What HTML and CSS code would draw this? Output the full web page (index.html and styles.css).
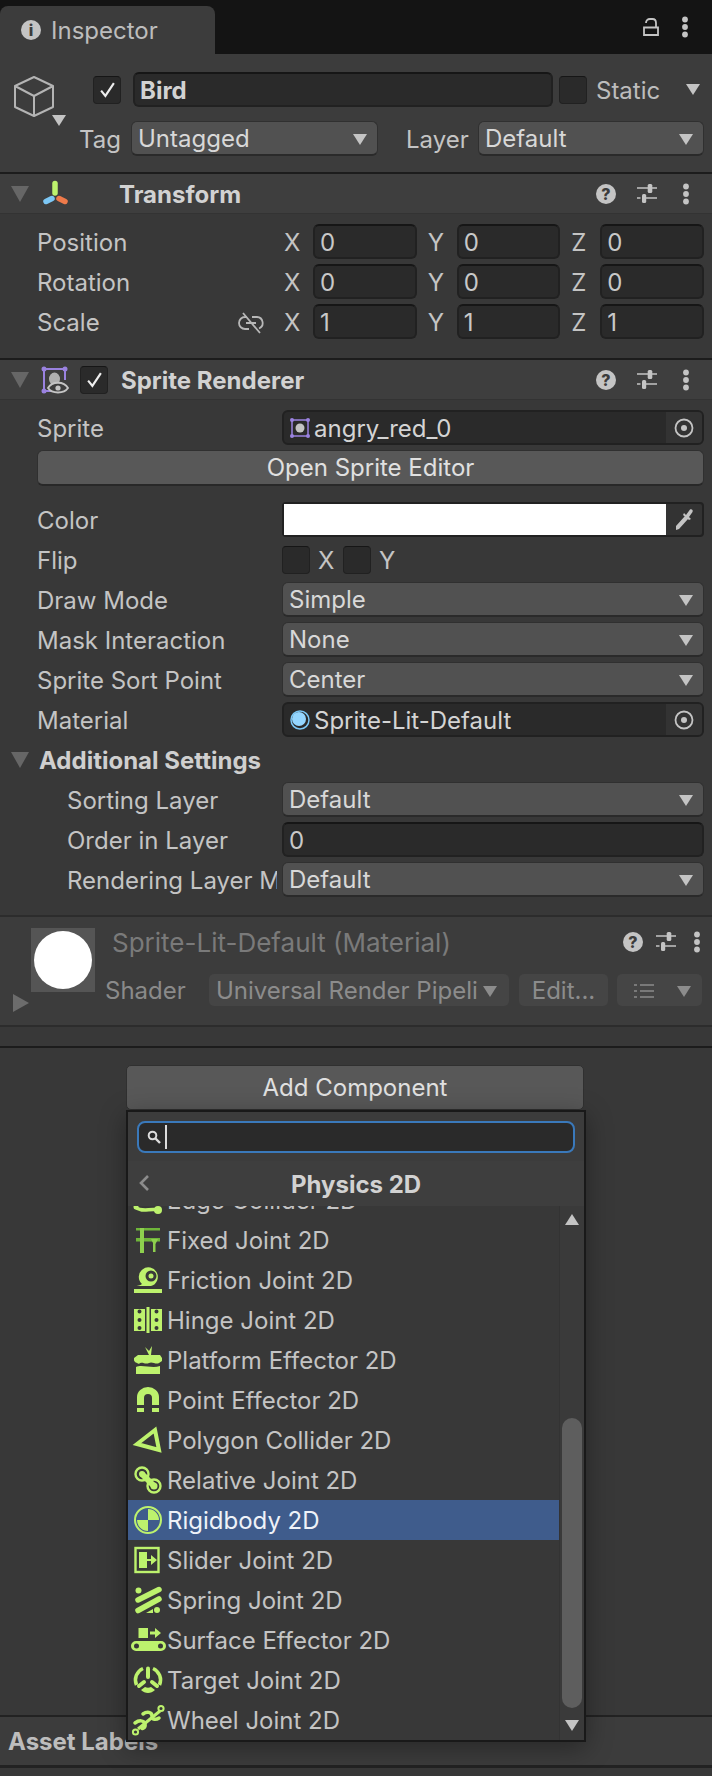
FILE: index.html
```html
<!DOCTYPE html>
<html lang="en">
<head>
    <meta charset="UTF-8">
    <title>Inspector</title>
    <link rel="stylesheet" href="styles.css">
</head>
<body>
    <svg class="defs" width="0" height="0">
        <symbol id="help" viewBox="0 0 20 20">
            <circle cx="10" cy="10" r="10" fill="#c4c4c4"/>
            <text x="10" y="16" text-anchor="middle" class="help-mark">?</text>
        </symbol>
        <symbol id="sliders" viewBox="0 0 20 20">
            <path d="M0 4H11M15 4H20M0 14H3.500M9 14H20" fill="none" stroke="#c4c4c4" stroke-width="1.700"/>
            <rect x="10.700" y="0" width="4.600" height="9" rx="1.500" fill="#c4c4c4"/>
            <rect x="5" y="10" width="4.200" height="9" rx="1.500" fill="#c4c4c4"/>
        </symbol>
        <symbol id="dots" viewBox="0 0 8 22">
            <circle cx="4" cy="3.500" r="2.900" fill="#c4c4c4"/>
            <circle cx="4" cy="11" r="2.900" fill="#c4c4c4"/>
            <circle cx="4" cy="18.500" r="2.900" fill="#c4c4c4"/>
        </symbol>
        <symbol id="target" viewBox="0 0 20 20">
            <circle cx="10" cy="10" r="8.500" fill="none" stroke="#c4c4c4" stroke-width="1.800"/>
            <circle cx="10" cy="10" r="3" fill="#c4c4c4"/>
        </symbol>
    </svg>

    <div class="tabbar">
        <div class="tab">
            <svg class="tab-icon" viewBox="0 0 20 20">
                <circle cx="10" cy="10" r="10" fill="#c4c4c4"/>
                <text x="10" y="16" text-anchor="middle" class="info-mark">i</text>
            </svg>
            <span>Inspector</span>
        </div>
        <div class="tab-tools">
            <svg class="lock" viewBox="0 0 16 18">
                <path d="M3 5C3 2.500 4.500 1 7 1H9.500C11.500 1 13 2.500 13 5V9.500M1 9.500H15V17H1Z" fill="none" stroke="#c4c4c4" stroke-width="1.800"/>
            </svg>
            <svg class="icon-dots"><use href="#dots"/></svg>
        </div>
    </div>

    <div class="obj-head">
        <div class="name-row">
            <div class="cube-wrap">
                <svg class="cube" viewBox="0 0 40 41">
                    <path d="M20 1L39 10V31L20 40L1 31V10ZM1 10L20 20L39 10M20 20V40" fill="none" stroke="#b4b4b4" stroke-width="2" stroke-linejoin="round"/>
                </svg>
                <i class="arrow cube-arrow"></i>
            </div>
            <div class="check checked">
                <svg viewBox="0 0 16 16"><path d="M2 9L6 14L14 2" fill="none" stroke="#eee" stroke-width="2"/></svg>
            </div>
            <div class="field name-field">Bird</div>
            <div class="check"></div>
            <span class="static-label">Static</span>
            <i class="arrow static-arrow"></i>
        </div>
        <div class="tag-row">
            <span class="tag-label">Tag</span>
            <div class="dropdown tag-drop">Untagged<i class="arrow"></i></div>
            <span class="layer-label">Layer</span>
            <div class="dropdown layer-drop">Default<i class="arrow"></i></div>
        </div>
    </div>

    <div class="comp-head">
        <i class="fold"></i>
        <svg class="comp-icon" viewBox="0 0 27 28">
            <path d="M14 3.500V13" stroke="#bdf26d" stroke-width="5.500" stroke-linecap="round"/>
            <path d="M5 21.500L11 18.500" stroke="#7cc7f5" stroke-width="5.500" stroke-linecap="round"/>
            <path d="M18 18.500L24 21.500" stroke="#ee7a4a" stroke-width="5.500" stroke-linecap="round"/>
        </svg>
        <span class="comp-spacer"></span>
        <b class="comp-title">Transform</b>
        <svg class="head-tool"><use href="#help"/></svg>
        <svg class="head-tool slide"><use href="#sliders"/></svg>
        <svg class="head-tool small"><use href="#dots"/></svg>
    </div>
    <div class="comp-body transform-body">
        <div class="row">
            <span class="label">Position</span>
            <div class="vec">
                <div class="vec-cell"><span>X</span><div class="field">0</div></div>
                <div class="vec-cell"><span>Y</span><div class="field">0</div></div>
                <div class="vec-cell"><span>Z</span><div class="field">0</div></div>
            </div>
        </div>
        <div class="row">
            <span class="label">Rotation</span>
            <div class="vec">
                <div class="vec-cell"><span>X</span><div class="field">0</div></div>
                <div class="vec-cell"><span>Y</span><div class="field">0</div></div>
                <div class="vec-cell"><span>Z</span><div class="field">0</div></div>
            </div>
        </div>
        <div class="row">
            <span class="label scale-label">Scale
                <svg class="link" viewBox="0 0 26 22">
                    <path d="M9 5H7A6 6 0 0 0 7 17H11M14 5H19A6 6 0 0 1 21 16.500M8 11H18M5 1L22 21" fill="none" stroke="#b8b8b8" stroke-width="1.800"/>
                </svg>
            </span>
            <div class="vec">
                <div class="vec-cell"><span>X</span><div class="field">1</div></div>
                <div class="vec-cell"><span>Y</span><div class="field">1</div></div>
                <div class="vec-cell"><span>Z</span><div class="field">1</div></div>
            </div>
        </div>
    </div>

    <div class="comp-head">
        <i class="fold"></i>
        <svg class="comp-icon" viewBox="0 0 27 28">
            <path d="M3 3H24V14M3 3V25H10" fill="none" stroke="#9a82e0" stroke-width="2"/>
            <circle cx="3" cy="3" r="2.500" fill="#9a82e0"/><circle cx="24" cy="3" r="2.500" fill="#9a82e0"/><circle cx="3" cy="25" r="2.500" fill="#9a82e0"/>
            <ellipse cx="13.500" cy="13" rx="5.500" ry="6.500" fill="#b0b0b0"/>
            <path d="M7 22C11 15 23 15 27 22C23 28 11 28 7 22Z" fill="#3e3e3e" stroke="#c4c4c4" stroke-width="1.800"/>
            <circle cx="17" cy="22" r="2.600" fill="#c4c4c4"/>
        </svg>
        <div class="check checked head-check">
            <svg viewBox="0 0 16 16"><path d="M2 9L6 14L14 2" fill="none" stroke="#eee" stroke-width="2"/></svg>
        </div>
        <b class="comp-title">Sprite Renderer</b>
        <svg class="head-tool"><use href="#help"/></svg>
        <svg class="head-tool slide"><use href="#sliders"/></svg>
        <svg class="head-tool small"><use href="#dots"/></svg>
    </div>
    <div class="comp-body sprite-body">
        <div class="row">
            <span class="label">Sprite</span>
            <div class="object-field">
                <svg class="obj-icon" viewBox="0 0 20 20">
                    <rect x="2" y="2" width="16" height="16" fill="none" stroke="#9a82e0" stroke-width="1.500"/>
                    <circle cx="2" cy="2" r="2" fill="#9a82e0"/><circle cx="18" cy="2" r="2" fill="#9a82e0"/><circle cx="2" cy="18" r="2" fill="#9a82e0"/><circle cx="18" cy="18" r="2" fill="#9a82e0"/>
                    <circle cx="10" cy="10" r="4.500" fill="#c4c4c4"/>
                </svg>
                <span class="object-name">angry_red_0</span>
                <div class="picker"><svg class="picker-icon"><use href="#target"/></svg></div>
            </div>
        </div>
        <button class="wide-btn">Open Sprite Editor</button>
        <div class="row color-row">
            <span class="label">Color</span>
            <div class="color-field">
                <div class="swatch"></div>
                <div class="dropper">
                    <svg viewBox="0 0 20 24"><path d="M2 22L2 18L11 8L14 11L5 21ZM10 5L12 7L16 1.500C17.500 .5 19.500 2 18.500 4L15 9L17 11L15 12L9 7Z" fill="#c4c4c4"/></svg>
                </div>
            </div>
        </div>
        <div class="row">
            <span class="label">Flip</span>
            <div class="flip">
                <div class="check"></div><span>X</span>
                <div class="check"></div><span>Y</span>
            </div>
        </div>
        <div class="row">
            <span class="label">Draw Mode</span>
            <div class="dropdown">Simple<i class="arrow"></i></div>
        </div>
        <div class="row">
            <span class="label">Mask Interaction</span>
            <div class="dropdown">None<i class="arrow"></i></div>
        </div>
        <div class="row">
            <span class="label">Sprite Sort Point</span>
            <div class="dropdown">Center<i class="arrow"></i></div>
        </div>
        <div class="row">
            <span class="label">Material</span>
            <div class="object-field">
                <svg class="obj-icon" viewBox="0 0 20 20">
                    <circle cx="10" cy="10" r="9" fill="none" stroke="#7cc7f5" stroke-width="1.500"/>
                    <circle cx="9" cy="9" r="7" fill="#94d6ff"/>
                </svg>
                <span class="object-name">Sprite-Lit-Default</span>
                <div class="picker"><svg class="picker-icon"><use href="#target"/></svg></div>
            </div>
        </div>
        <div class="row fold-row">
            <i class="fold"></i>
            <b>Additional Settings</b>
        </div>
        <div class="row sub">
            <span class="label">Sorting Layer</span>
            <div class="dropdown">Default<i class="arrow"></i></div>
        </div>
        <div class="row sub">
            <span class="label">Order in Layer</span>
            <div class="field">0</div>
        </div>
        <div class="row sub">
            <span class="label">Rendering Layer Mask</span>
            <div class="dropdown">Default<i class="arrow"></i></div>
        </div>
    </div>

    <div class="mat">
        <i class="fold closed"></i>
        <div class="mat-preview"><div class="mat-ball"></div></div>
        <div class="mat-main">
            <div class="mat-title">
                <span>Sprite-Lit-Default (Material)</span>
                <svg class="mat-tool"><use href="#help"/></svg>
                <svg class="mat-tool slide"><use href="#sliders"/></svg>
                <svg class="mat-tool small"><use href="#dots"/></svg>
            </div>
            <div class="mat-shader">
                <span class="shader-label">Shader</span>
                <div class="dim-drop shader-drop"><span>Universal Render Pipeline/2D/Sprite-Lit-Default</span><i class="arrow"></i></div>
                <div class="dim-drop edit-btn">Edit...</div>
                <div class="dim-drop list-btn">
                    <svg viewBox="0 0 20 16"><path d="M6 2H20M6 8H20M6 14H20M0 2H3M0 8H3M0 14H3" stroke="#8a8a8a" stroke-width="1.600" fill="none"/></svg>
                    <i class="arrow"></i>
                </div>
            </div>
        </div>
    </div>
    <div class="mat-gap"></div>

    <div class="bottom">
        <button class="add-btn">Add Component</button>
    </div>
    <div class="labels"><b>Asset Labels</b></div>

    <div class="popup">
        <div class="search-wrap">
            <div class="search">
                <svg viewBox="0 0 14 14"><circle cx="5.500" cy="5.500" r="3.800" fill="none" stroke="#ddd" stroke-width="2"/><path d="M8.500 8.500L13 13" stroke="#ddd" stroke-width="2.400"/></svg>
                <i class="caret"></i>
            </div>
        </div>
        <div class="popup-title">
            <svg viewBox="0 0 12 18"><path d="M10 2L3 9L10 16" fill="none" stroke="#8c8c8c" stroke-width="2.600"/></svg>
            <b>Physics 2D</b>
        </div>
        <div class="popup-body">
            <ul class="list">
                <li>
                    <svg viewBox="0 0 28 28"><path d="M1 21C8 27 16 22 24 24" fill="none" stroke="#bdf26d" stroke-width="3.500"/><circle cx="24" cy="24" r="4" fill="#bdf26d"/><circle cx="2" cy="21" r="2.500" fill="#bdf26d"/></svg>
                    Edge Collider 2D
                </li>
                <li>
                    <svg viewBox="0 0 28 28"><path d="M2 2H26V4.500H2ZM2 12H26V15.500H2Z" fill="#6fb53a"/><path d="M6 2H10V27H6ZM19 13H21.500V26H19ZM17 13H24L21 19H20Z" fill="#8ed04e"/></svg>
                    Fixed Joint 2D
                </li>
                <li>
                    <svg viewBox="0 0 28 28"><path d="M0 23H28V27H0ZM0 20C4 20 6 19.500 8 18A9.500 9.500 0 1 1 17 20H0Z" fill="#bdf26d"/><circle cx="17" cy="10" r="5.500" fill="#3a3a3a"/><circle cx="17" cy="10" r="2.500" fill="#bdf26d"/></svg>
                    Friction Joint 2D
                </li>
                <li>
                    <svg viewBox="0 0 28 28" fill-rule="evenodd"><path fill="#bdf26d" d="M0 3H11V25H0ZM3.500 5.500a2 2 0 1 0 4 0a2 2 0 1 0 -4 0ZM3.500 14a2 2 0 1 0 4 0a2 2 0 1 0 -4 0ZM3.500 22a2 2 0 1 0 4 0a2 2 0 1 0 -4 0ZM17 3H28V25H17ZM20.500 5.500a2 2 0 1 0 4 0a2 2 0 1 0 -4 0ZM20.500 14a2 2 0 1 0 4 0a2 2 0 1 0 -4 0ZM20.500 22a2 2 0 1 0 4 0a2 2 0 1 0 -4 0ZM12.500 1H15.500V27H12.500Z"/></svg>
                    Hinge Joint 2D
                </li>
                <li>
                    <svg viewBox="0 0 28 28"><path d="M15 9L11 1L15 5L18 0L17 9Z" fill="#bdf26d"/><path d="M0 12L4 9H26L28 12V15L25 17C22 19 18 15 15 17C11 19 8 15 5 18C3 17 0 16 0 14Z" fill="#bdf26d"/><path d="M2 21C8 18 18 23 26 20V28H2Z" fill="#bdf26d"/></svg>
                    Platform Effector 2D
                </li>
                <li>
                    <svg viewBox="0 0 28 28"><path d="M3 19V11A11 10 0 0 1 25 11V19H18V12A4 4 0 0 0 10 12V19ZM3 22H10V26H3ZM18 22H25V26H18Z" fill="#bdf26d"/></svg>
                    Point Effector 2D
                </li>
                <li>
                    <svg viewBox="0 0 28 28"><path d="M21 4L25 24L3 18Z" fill="none" stroke="#bdf26d" stroke-width="4" stroke-linejoin="miter"/></svg>
                    Polygon Collider 2D
                </li>
                <li>
                    <svg viewBox="0 0 28 28"><circle cx="8" cy="8" r="6.500" fill="none" stroke="#bdf26d" stroke-width="2.400"/><circle cx="20" cy="20" r="6.500" fill="none" stroke="#bdf26d" stroke-width="2.400"/><circle cx="8" cy="8" r="3" fill="#bdf26d"/><circle cx="20" cy="20" r="3.500" fill="#bdf26d"/><path d="M8 8L20 20" stroke="#bdf26d" stroke-width="6"/></svg>
                    Relative Joint 2D
                </li>
                <li class="active">
                    <svg viewBox="0 0 28 28"><circle cx="14" cy="14" r="13" fill="none" stroke="#bdf26d" stroke-width="2"/><path d="M14 3A11 11 0 0 1 25 14H14ZM14 14V25A11 11 0 0 1 3 14Z" fill="#bdf26d"/></svg>
                    Rigidbody 2D
                </li>
                <li>
                    <svg viewBox="0 0 28 28"><rect x="1.500" y="2" width="23" height="24" fill="none" stroke="#bdf26d" stroke-width="2.400"/><path d="M5 6H13V22H5ZM13 13H17V9L23 14L17 19V15H13Z" fill="#bdf26d"/></svg>
                    Slider Joint 2D
                </li>
                <li>
                    <svg viewBox="0 0 28 28"><path d="M4 14L25 3.500M4 24.500L25 13" stroke="#bdf26d" stroke-width="5.500" stroke-linecap="round"/><circle cx="4.500" cy="4.500" r="3" fill="#bdf26d"/><circle cx="23" cy="24" r="3" fill="#bdf26d"/><path d="M12 27L19 23V27Z" fill="#bdf26d"/></svg>
                    Spring Joint 2D
                </li>
                <li>
                    <svg viewBox="0 0 28 28" fill-rule="evenodd"><path fill="#bdf26d" d="M4.500 2H14V12H4.500ZM16 5.500H21V2L27 7L21 12V8.500H16ZM2 15H27A5 5 0 0 1 27 25H2A5 5 0 0 1 2 15ZM0 20a2.500 2.500 0 1 0 5 0a2.500 2.500 0 1 0 -5 0ZM24 20a2.500 2.500 0 1 0 5 0a2.500 2.500 0 1 0 -5 0Z"/></svg>
                    Surface Effector 2D
                </li>
                <li>
                    <svg viewBox="0 0 28 28" fill="none"><path d="M9 2.500A12.500 12.500 0 0 0 2.500 19M19 2.500A12.500 12.500 0 0 1 25.500 19" stroke="#bdf26d" stroke-width="3.500"/><path d="M14 2.500V11" stroke="#bdf26d" stroke-width="4" stroke-linecap="round"/><path d="M10 16L5 20M18 16L23 20" stroke="#bdf26d" stroke-width="4" stroke-linecap="round"/><path d="M7 24C11 28 17 28 21 24L17 21C15 22 13 22 11 21Z" fill="#bdf26d"/></svg>
                    Target Joint 2D
                </li>
                <li>
                    <svg viewBox="0 0 28 28" fill="none"><path d="M4 23L26 5" stroke="#bdf26d" stroke-width="3"/><path d="M1 17C5 14 10 14 11 18C12 22 7 24 8 21M9 8C13 5 18 6 18 10C18 14 22 14 25 12" stroke="#bdf26d" stroke-width="3.500" stroke-linecap="round"/><circle cx="1.500" cy="26" r="2.600" stroke="#bdf26d" stroke-width="2"/><circle cx="27" cy="2.500" r="2.600" stroke="#bdf26d" stroke-width="2"/></svg>
                    Wheel Joint 2D
                </li>
            </ul>
            <div class="scrollbar">
                <i class="arrow up"></i>
                <div class="thumb"></div>
                <i class="arrow down"></i>
            </div>
        </div>
    </div>
</body>
</html>
```

FILE: styles.css
```css
* {
    box-sizing: border-box;
}

body {
    margin: 0;
    width: 712px;
    height: 1776px;
    overflow: hidden;
    position: relative;
    background-color: #383838;
    color: #c4c4c4;
    font-family: Inter, "Liberation Sans", sans-serif;
    font-size: 24px;
    line-height: 1.25;
}

svg {
    overflow: visible;
}

.defs {
    position: absolute;
}

.help-mark {
    font: 800 16px Inter, sans-serif;
    fill: #3c3c3c;
}

.info-mark {
    font: 800 16px Inter, sans-serif;
    fill: #3c3c3c;
}

/* text sits a pixel low in the editor */
.label,
.field,
.dropdown,
.object-name,
.static-label,
.tag-label,
.layer-label,
.vec-cell span,
.flip span,
.tab span,
.mat-title span,
.shader-label,
.dim-drop,
.wide-btn,
.add-btn,
.list li,
b {
    padding-top: 2px;
}

/* tab bar */
.tabbar {
    height: 54px;
    background-color: #141414;
    display: flex;
    justify-content: space-between;
}

.tab {
    width: 215px;
    margin-top: 6px;
    background-color: #3c3c3c;
    border-radius: 8px 8px 0 0;
    display: flex;
    align-items: center;
    padding-left: 21px;
    color: #bdbdbd;
}

.tab-icon {
    width: 20px;
    height: 20px;
    margin-right: 10px;
}

.tab-tools {
    display: flex;
    align-items: center;
    padding-right: 23px;
    gap: 22px;
}

.lock {
    width: 16px;
    height: 18px;
}

.icon-dots {
    width: 8px;
    height: 22px;
}

/* object header */
.obj-head {
    height: 118px;
    background-color: #3c3c3c;
    padding-top: 18px;
}

.name-row {
    height: 35px;
    display: flex;
    align-items: center;
}

.cube-wrap {
    width: 93px;
    height: 35px;
    padding: 4px 0 0 14px;
    display: flex;
    align-items: flex-start;
}

.cube {
    width: 40px;
    height: 41px;
    flex: none;
}

.cube-arrow {
    margin: 39px 0 0 -2px;
}

.check {
    width: 28px;
    height: 28px;
    flex: none;
    background-color: #2a2a2a;
    border: 1px solid #212121;
    border-top-color: #161616;
    border-radius: 4px;
    display: flex;
    align-items: center;
    justify-content: center;
}

.check svg {
    width: 17px;
    height: 17px;
}

.field {
    flex: 1;
    height: 35px;
    background-color: #2a2a2a;
    border: 2px solid #212121;
    border-top-color: #161616;
    border-radius: 6px;
    display: flex;
    align-items: center;
    padding-left: 5px;
    color: #c8c8c8;
    min-width: 0;
}

.name-field {
    flex: none;
    width: 420px;
    margin: 0 6px 0 12px;
    font-weight: 700;
    color: #d2d2d2;
}

.static-label {
    margin-left: 9px;
    width: 90px;
    flex: none;
    color: #bdbdbd;
}

.tag-row {
    display: flex;
    align-items: center;
    height: 35px;
    margin-top: 14px;
    padding-left: 79px;
}

.tag-label {
    width: 52px;
    flex: none;
}

.layer-label {
    margin-left: 28px;
    width: 72px;
    flex: none;
}

.dropdown {
    flex: 1;
    height: 35px;
    background-color: #515151;
    border: 1px solid #303030;
    border-bottom: 2px solid #2a2a2a;
    border-radius: 6px;
    display: flex;
    align-items: center;
    justify-content: space-between;
    padding-right: 10px;
    padding-left: 6px;
    color: #d8d8d8;
    min-width: 0;
}

.tag-drop {
    flex: none;
    width: 247px;
}

.layer-drop {
    flex: none;
    width: 226px;
}

.arrow {
    display: block;
    flex: none;
    width: 0;
    height: 0;
    border-left: 7px solid transparent;
    border-right: 7px solid transparent;
    border-top: 11px solid #c4c4c4;
}

/* components */
.comp-head {
    height: 42px;
    background-color: #3e3e3e;
    border-top: 2px solid #1c1c1c;
    border-bottom: 1px solid #333;
    display: flex;
    align-items: center;
    padding-left: 11px;
}

.fold {
    display: block;
    flex: none;
    width: 0;
    height: 0;
    border-left: 9px solid transparent;
    border-right: 9px solid transparent;
    border-top: 16px solid #666;
}

.fold.closed {
    border-top: 9px solid transparent;
    border-bottom: 9px solid transparent;
    border-left: 16px solid #6c6c6c;
    border-right: 0;
}

.comp-icon {
    width: 27px;
    height: 28px;
    margin-left: 12px;
    flex: none;
}

.comp-spacer {
    width: 51px;
}

.head-check {
    margin-left: 12px;
    margin-right: 13px;
}

.comp-title {
    flex: 1;
    color: #d2d2d2;
    font-weight: 700;
}

.head-tool {
    width: 20px;
    height: 20px;
    margin-right: 21px;
    flex: none;
}

.head-tool.slide {
    margin-right: 25px;
}

.head-tool.small {
    width: 8px;
    height: 22px;
    margin-right: 22px;
}

.comp-body {
    background-color: #383838;
}

.transform-body {
    height: 144px;
    padding-top: 10px;
}

.sprite-body {
    height: 515px;
    padding-top: 10px;
}

.row {
    display: flex;
    align-items: center;
    height: 35px;
    margin-bottom: 5px;
    padding: 0 8px 0 37px;
}

.label {
    width: 245px;
    flex: none;
    white-space: nowrap;
    overflow: hidden;
}

.scale-label {
    display: flex;
    align-items: center;
    justify-content: space-between;
    padding-right: 18px;
}

.link {
    width: 26px;
    height: 22px;
}

.vec {
    flex: 1;
    display: grid;
    grid-template-columns: repeat(3, 1fr);
    gap: 11px;
    margin-left: 2px;
}

.vec-cell {
    display: flex;
    align-items: center;
}

.vec-cell span {
    width: 29px;
    flex: none;
}

.object-field {
    flex: 1;
    height: 35px;
    background-color: #2a2a2a;
    border: 2px solid #212121;
    border-radius: 6px;
    display: flex;
    align-items: center;
    padding-left: 6px;
    color: #d4d4d4;
}

.obj-icon {
    width: 20px;
    height: 20px;
    margin-right: 4px;
    flex: none;
}

.object-name {
    flex: 1;
}

.picker {
    width: 36px;
    height: 31px;
    background-color: #333;
    display: flex;
    align-items: center;
    justify-content: center;
    border-radius: 0 4px 4px 0;
}

.picker-icon {
    width: 20px;
    height: 20px;
}

.wide-btn {
    display: block;
    width: 667px;
    height: 36px;
    margin: 1px 0 16px 37px;
    background-color: #585858;
    border: 1px solid #303030;
    border-bottom: 2px solid #282828;
    border-radius: 6px;
    color: #e0e0e0;
    font: inherit;
    padding-left: 0;
    padding-right: 0;
}

.color-field {
    flex: 1;
    height: 35px;
    background-color: #333;
    border: 2px solid #212121;
    border-radius: 4px;
    display: flex;
}

.swatch {
    flex: 1;
    background-color: #fff;
}

.dropper {
    width: 36px;
    display: flex;
    align-items: center;
    justify-content: center;
}

.dropper svg {
    width: 20px;
    height: 24px;
}

.flip {
    display: flex;
    align-items: center;
}

.flip span {
    margin: 0 8px;
    width: 17px;
}

.fold-row {
    padding-left: 11px;
}

.fold-row b {
    margin-left: 10px;
    color: #cfcfcf;
}

.sub {
    padding-left: 67px;
}

.sub .label {
    width: 210px;
    margin-right: 5px;
}

/* material */
.mat {
    height: 112px;
    background-color: #3c3c3c;
    border-top: 2px solid #2c2c2c;
    border-bottom: 2px solid #2c2c2c;
    display: flex;
    padding: 11px 0 0 13px;
}

.mat-gap {
    height: 19px;
}

.mat .fold.closed {
    margin-top: 66px;
}

.mat-preview {
    width: 64px;
    height: 64px;
    margin-left: 2px;
    background-color: #555;
    padding: 3px;
    flex: none;
}

.mat-ball {
    width: 58px;
    height: 58px;
    background-color: #fff;
    border-radius: 50%;
}

.mat-main {
    flex: 1;
    margin-left: 10px;
    color: #7a7a7a;
}

.mat-title {
    height: 28px;
    display: flex;
    align-items: center;
    padding-left: 7px;
}

.mat-title span {
    flex: 1;
    font-size: 26px;
    white-space: nowrap;
}

.mat-tool {
    width: 20px;
    height: 20px;
    margin-right: 13px;
    flex: none;
}

.mat-tool.slide {
    margin-right: 17px;
}

.mat-tool.small {
    width: 8px;
    height: 22px;
    margin-right: 11px;
}

.mat-shader {
    display: flex;
    align-items: center;
    margin-top: 18px;
}

.shader-label {
    width: 104px;
    flex: none;
    color: #8a8a8a;
}

.dim-drop {
    height: 32px;
    background-color: #454545;
    border-radius: 5px;
    display: flex;
    align-items: center;
    color: #8c8c8c;
    flex: none;
}

.dim-drop .arrow {
    border-top-color: #8c8c8c;
}

.shader-drop {
    width: 300px;
    padding-left: 7px;
    padding-right: 12px;
    justify-content: space-between;
}

.shader-drop span {
    overflow: hidden;
    white-space: nowrap;
    flex: 1;
    margin-right: 4px;
}

.edit-btn {
    width: 89px;
    margin-left: 10px;
    justify-content: center;
}

.list-btn {
    width: 85px;
    margin-left: 9px;
    padding-left: 17px;
    padding-right: 11px;
    justify-content: space-between;
}

.list-btn svg {
    width: 20px;
    height: 16px;
}

/* bottom */
.bottom {
    height: 669px;
    border-top: 2px solid #1c1c1c;
    padding: 17px 0 0 126px;
}

.add-btn {
    display: block;
    width: 458px;
    height: 45px;
    padding-left: 0;
    padding-right: 0;
    background-color: #585858;
    border: 1px solid #303030;
    border-radius: 5px;
    color: #e0e0e0;
    font: inherit;
}

.labels {
    height: 53px;
    border-top: 2px solid #222;
    border-bottom: 3px solid #222;
    background-color: #3c3c3c;
    padding-left: 8px;
    display: flex;
    align-items: center;
    color: #bdbdbd;
}

/* add component popup */
.popup {
    position: absolute;
    left: 126px;
    top: 1110px;
    width: 460px;
    height: 632px;
    background-color: #383838;
    border: 2px solid #191919;
    box-shadow: 0 6px 24px rgba(0, 0, 0, .35);
    display: flex;
    flex-direction: column;
}

.search-wrap {
    height: 49px;
    padding: 9px 9px 0;
    background-color: #3c3c3c;
    flex: none;
}

.search {
    height: 32px;
    background-color: #2a2a2a;
    border: 2px solid #3a79bb;
    border-radius: 8px;
    display: flex;
    align-items: center;
    padding-left: 8px;
}

.search svg {
    width: 14px;
    height: 14px;
}

.caret {
    width: 2px;
    height: 24px;
    margin-left: 4px;
    background-color: #ddd;
}

.popup-title {
    height: 45px;
    flex: none;
    background-color: #3e3e3e;
    display: flex;
    align-items: center;
    justify-content: center;
    position: relative;
    color: #d2d2d2;
}

.popup-title svg {
    position: absolute;
    left: 10px;
    top: 13px;
    width: 12px;
    height: 18px;
}

.popup-body {
    flex: 1;
    display: flex;
    min-height: 0;
}

.list {
    flex: 1;
    list-style: none;
    margin: 0;
    padding: 0;
    overflow: hidden;
    min-width: 0;
}

.list li {
    height: 40px;
    display: flex;
    align-items: center;
    gap: 5px;
    padding-left: 6px;
}

.list li:first-child {
    margin-top: -26px;
}

.list li svg {
    width: 28px;
    height: 28px;
    flex: none;
    margin-top: -2px;
}

.list li.active {
    background-color: #3f5c8c;
    color: #eef2f8;
}

.scrollbar {
    width: 25px;
    flex: none;
    background-color: #3a3a3a;
    border-left: 1px solid #333;
    display: flex;
    flex-direction: column;
    align-items: center;
    padding-top: 8px;
}

.scrollbar .up {
    border-top: 0;
    border-bottom: 11px solid #c4c4c4;
}

.thumb {
    width: 20px;
    height: 290px;
    margin-top: 193px;
    background-color: #5e5e5e;
    border-radius: 10px;
}

.scrollbar .down {
    margin-top: 12px;
}
```
